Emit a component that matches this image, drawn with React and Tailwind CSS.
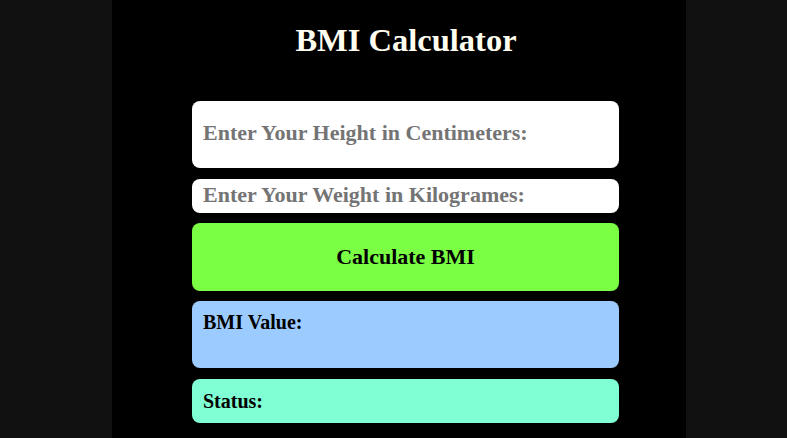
import { useState } from 'react'

export default function App() {
  const [height, setHeight] = useState('')
  const [weight, setWeight] = useState('')
  const [bmi, setBmi] = useState('')
  const [status, setStatus] = useState('')

  const calc = () => {
    const h = parseFloat(height) / 100
    const w = parseFloat(weight)
    if (!h || !w) return
    const v = w / (h * h)
    setBmi(v.toFixed(2))
    setStatus(v < 18.5 ? 'Underweight' : v < 25 ? 'Normal' : v < 30 ? 'Overweight' : 'Obese')
  }

  return (
    <div className="min-h-screen bg-[#111111] font-['Liberation_Serif',serif] font-bold">
      <div className="ml-[112px] w-[574px] min-h-screen bg-black pt-[20px] pb-4">
        <h1 className="pl-[14px] text-center text-[32.5px] leading-[40px] text-[#fffdf0]">BMI Calculator</h1>

        <div className="ml-[80px] mt-[41px] w-[427px] flex flex-col">
          <input
            value={height}
            onChange={(e) => setHeight(e.target.value)}
            placeholder="Enter Your Height in Centimeters:"
            className="h-[67px] w-full rounded-lg bg-white px-[11px] pb-[3px] text-[22px] text-black outline-none placeholder:text-[#747474]"
          />
          <input
            value={weight}
            onChange={(e) => setWeight(e.target.value)}
            placeholder="Enter Your Weight in Kilogrames:"
            className="mt-[11px] h-[34px] w-full rounded-lg bg-white px-[11px] pb-[3px] text-[22px] leading-[28px] text-black outline-none placeholder:text-[#747474]"
          />
          <button
            onClick={calc}
            className="mt-[10px] h-[68px] w-full rounded-lg bg-[#7bff45] pb-[2px] text-[22px] text-black"
          >
            Calculate BMI
          </button>
          <div className="mt-[10px] h-[67px] rounded-lg bg-[#9ccbff] px-[11px] pt-[8px] text-[20px] leading-[26px] text-black">
            BMI Value: {bmi}
          </div>
          <div className="mt-[11px] h-[44px] rounded-lg bg-[#80ffd4] px-[11px] flex items-center text-[20px] text-black">
            Status: {status}
          </div>
        </div>
      </div>
    </div>
  )
}
